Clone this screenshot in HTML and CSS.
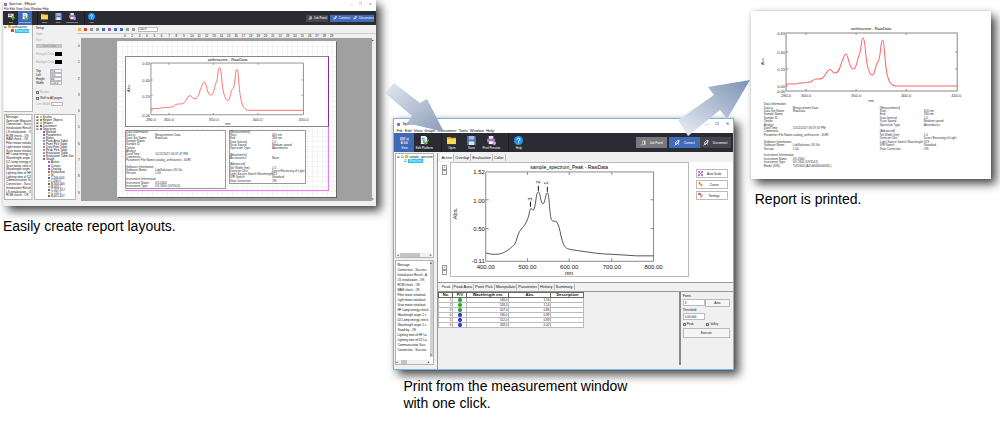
FILE: index.html
```html
<!DOCTYPE html>
<html lang="en">
<head>
    <meta charset="UTF-8">
    <meta name="viewport" content="width=device-width, initial-scale=1.0">
    <title>Report printing</title>
    <link rel="stylesheet" href="styles.css">
</head>
<body>
    <!-- Shared icons and the anthracene curve -->
    <svg class="defs" aria-hidden="true">
        <symbol id="i-view" viewBox="0 0 10 10"><path fill="#b9a6d8" d="M0 1h6v4H0zM4 6h5v3H4z"/><path fill="#8fb0dc" d="M1 2h4v2H1zM7 2h3v3H7z"/><path fill="#d5def0" d="M1 6h2v3H1z"/></symbol>
        <symbol id="i-new" viewBox="0 0 10 10"><path fill="#e9e6ef" d="M0 1h8v5H0z"/><path fill="#9061a8" d="M1 2h4v2H1z"/><path fill="#5bb043" d="M6 4h2v2h2v2H8v2H6V8H4V6h2z"/></symbol>
        <symbol id="i-edit" viewBox="0 0 10 10"><path fill="#f4f6f8" d="M1 0h5l2 2v7H1z"/><path fill="#4d86c8" d="M2 2h3v1H2zM2 4h4v1H2z"/><path fill="#5db336" d="M4 5l2 2 3-3 1 1-4 5-3-3z"/></symbol>
        <symbol id="i-folder" viewBox="0 0 10 10"><path fill="#d9a520" d="M0 1h4l1 1h5v7H0z"/><path fill="#f9d65c" d="M0 3h10v6H0z"/></symbol>
        <symbol id="i-disk" viewBox="0 0 10 10"><path fill="#4d70b4" d="M0 0h9l1 1v9H0z"/><path fill="#a9bddd" d="M2 0h6v4H2z"/><path fill="#dfe6f2" d="M2 6h6v4H2z"/></symbol>
        <symbol id="i-print" viewBox="0 0 10 10"><path fill="#e8e2ef" d="M2 0h5v4H2z"/><path fill="#9b72b4" d="M0 3h9v4H0z"/><path fill="#fff" d="M2 6h5v3H2z"/><circle cx="8" cy="8" r="2" fill="#c9a5dc"/></symbol>
        <symbol id="i-help" viewBox="0 0 10 10"><circle cx="5" cy="5" r="5" fill="#2196f3"/><path fill="none" stroke="#fff" d="M3.500 4q0-1.600 1.500-1.600T6.500 4Q6.500 5 5 5.500V6.500M5 7.300v1"/></symbol>
        <symbol id="i-panel" viewBox="0 0 10 10"><path fill="#e8e8e8" d="M4 1h5v7H4z"/><path fill="#222" d="M5 2h1v5H5z"/><path fill="#aaa" d="M1 7h6v2H1z"/></symbol>
        <symbol id="i-plug" viewBox="0 0 10 10"><path fill="none" stroke="currentColor" stroke-width="1.500" d="M1 9l2-2M3 4l3-3h2v2L5 7H3zM7 3l2-2M5 5l3 2"/></symbol>
        <symbol id="i-scale" viewBox="0 0 10 10"><path fill="none" stroke="#9b59c6" stroke-width="1.500" d="M1 1l8 8M9 1L1 9M1 4V1h3M6 1h3v3M9 6v3H6M4 9H1V6"/></symbol>
        <symbol id="i-cursor" viewBox="0 0 10 10"><path fill="#e0413a" d="M1 0l5 2-3 3z"/><path fill="#f2b632" d="M5 4h4v4H5z"/><path stroke="#a33" d="M3 3l4 5"/></symbol>
        <symbol id="i-settings" viewBox="0 0 10 10"><path fill="#9b6cc0" d="M0 0h6v4H0z"/><path fill="#f2b632" d="M4 4h4v5H4z"/><path fill="#d55" d="M7 3h2v3H7z"/></symbol>
        <symbol id="anthracene" viewBox="0 0 171 58" overflow="visible">
            <path class="frame" d="M0 0H171V58H0zM20 58v-2M70 58v-2M120 58v-2M20 0v2M70 0v2M120 0v2M0 19h2M0 36h2M0 53h2M171 19h-2M171 36h-2"/>
            <path class="curve-red" d="M0 51H9C12 50 15 50 22 49.500C26 49 27 46 30 46C34 45.500 36 47 39 42C41 39 42 36.500 44 36.500C46 36.500 46 40 49 40C54 40 54 31 57 26C58 23 59 21 60 21C62 21 63 36 67 36C71 36 71 25 73.500 21C75 18 75 5 77 5C79 5 79 20 81 31C82.500 38 84 42 86 42C89 42 89 33 91 30C95 28 94 7 96.500 7C98.500 7 98 27 101 41C103 50 105 52.500 110 53H171"/>
        </symbol>
    </svg>

    <main class="flow">
        <figure class="step">
            <div class="window editor">
                <header class="titlebar">
                    <span class="app-icon"></span><span>Spectrum - RReport</span>
                    <span class="win-buttons"><i>–</i><i>❐</i><i>✕</i></span>
                </header>
                <nav class="menu"><span>File</span><span>Edit</span><span>View</span><span>Data</span><span>Window</span><span>Help</span></nav>
                <div class="toolbar">
                    <button class="tool"><svg><use href="#i-new"/></svg>New</button>
                    <button class="tool active"><svg><use href="#i-edit"/></svg>Edit Platform</button>
                    <button class="tool gap-left"><svg><use href="#i-folder"/></svg>Open</button>
                    <button class="tool"><svg><use href="#i-disk"/></svg>Save</button>
                    <button class="tool"><svg><use href="#i-print"/></svg>Print Preview</button>
                    <button class="tool gap-left"><svg><use href="#i-help"/></svg>Help</button>
                    <div class="status-buttons">
                        <button class="dark"><svg><use href="#i-panel"/></svg>Job Panel</button>
                        <button class="blue"><svg><use href="#i-plug"/></svg>Connect</button>
                        <button class="blue joined"><svg><use href="#i-plug"/></svg>Disconnect</button>
                    </div>
                </div>
                <div class="editor-body">
                    <aside class="column">
                        <div class="pane tree"><p>⊟ <b class="y"></b>anthracene</p><p class="child"><b class="r"></b><mark>RawData</mark></p></div>
                        <ul class="pane messages">
                            <li>Message</li><li>Spectrum Measurem</li><li>Connection - Succes</li><li>Initialization Result - O</li><li>LS initialization - OK</li><li>ROM check - OK</li><li>RAM check - OK</li><li>Filter motor initializat</li><li>Light motor initializat</li><li>Scan motor initializat</li><li>HF Lamp energy che</li><li>Wavelength origin 1</li><li>D2 Lamp energy che</li><li>Scan motor slew ch</li><li>Wavelength origin -</li><li>Lighting time of HF</li><li>Lighting time of D2</li><li>Communication Su</li><li>Connection - Succes</li><li>Initialization Result -</li><li>LS initialization - OK</li><li>ROM check - OK</li>
                        </ul>
                    </aside>
                    <aside class="column">
                        <form class="properties">
                            <p>Setup</p>
                            <p class="dim">Style</p>
                            <p class="dim">Font</p>
                            <button type="button">Text Color</button>
                            <p class="dim swatch">Foregrd Color<b></b></p>
                            <p class="dim swatch">Backgrd Color<b></b></p>
                            <div class="sizes">
                                <label>Top<input value="9.0"></label>
                                <label>Left<input value="9.0"></label>
                                <label>Height<input value="68"></label>
                                <label>Width<input value="170.0"></label>
                            </div>
                            <label class="dim"><input type="checkbox" disabled>Border</label>
                            <label><input type="checkbox">Shift to All pages</label>
                            <label class="dim">Line Width <input class="spin" value="1"></label>
                        </form>
                        <ul class="pane items">
                            <li>⊞ <b class="y"></b>Scales</li><li>⊞ <b class="g"></b>Report Objects</li><li>⊞ <b class="y"></b>Shapes</li><li>⊞ <b class="u"></b>Document</li><li>⊟ <b class="v"></b>Spectrum</li>
                            <li class="l2"><b class="v"></b>Method</li><li class="l2"><b class="v"></b>Parameters</li><li class="l2"><b class="c"></b>Notes</li><li class="l2"><b></b>Peak Area Table</li><li class="l2"><b></b>Point Pick Table</li><li class="l2"><b></b>Data Print Table</li><li class="l2"><b></b>Peak Pick Table</li><li class="l2"><b></b>Evaluation Table</li><li class="l2"><b></b>Evaluation Table Det</li><li class="l2"><b class="v"></b>Graph</li>
                            <li class="l3"><b class="v"></b>Active</li><li class="l3"><b class="v"></b>Curves</li><li class="l3"><b class="v"></b>Overlay</li><li class="l3"><b class="v"></b>Evaluation</li><li class="l3"><b class="y"></b>Id</li><li class="l3"><b class="u"></b>1,200.000</li><li class="l3"><b class="y"></b>1,200.1</li><li class="l3"><b class="u"></b>B,300.000</li><li class="l3"><b class="y"></b>B,400.1</li><li class="l3"><b class="u"></b>C,317.317</li><li class="l3"><b class="y"></b>C,211.1</li><li class="l3"><b class="u"></b>B,401.417</li>
                        </ul>
                    </aside>
                    <section class="designer">
                        <div class="mini-tools">
                            <b class="y"></b><b class="r"></b><b></b><b></b><b class="u"></b><b class="v"></b><b class="u"></b><b class="u"></b><b></b><b></b>
                            <select aria-label="Zoom"><option>100%</option></select>
                        </div>
                        <div class="ruler">
                            <span>0</span><span>2</span><span>3</span><span>4</span><span>5</span><span>6</span><span>7</span><span>8</span><span>9</span><span>10</span><span>11</span><span>12</span><span>13</span><span>14</span><span>15</span><span>16</span><span>17</span><span>18</span><span>19</span><span>20</span><span>21</span><span>22</span><span>23</span><span>24</span><span>25</span><span>26</span><span>27</span><span>28</span><span>29</span>
                        </div>
                        <div class="workspace">
                            <div class="side-ruler"><i>0</i><i>1</i><i>2</i><i>3</i><i>4</i><i>5</i><i>6</i><i>7</i><i>8</i><i>9</i></div>
                            <div class="canvas">
                                <article class="sheet">
                                    <svg class="selected-plot" viewBox="0 0 203 69">
                                        <use href="#anthracene" x="25" y="6" width="153" height="52"/>
                                        <g class="small-text">
                                            <text x="102" y="4" class="mid dark-text">anthracene - RawData</text>
                                            <g class="end"><text x="24" y="8">0.63</text><text x="24" y="25">0.40</text><text x="24" y="41">0.20</text><text x="24" y="60">-0.06</text></g>
                                            <g class="mid"><text x="25" y="64">280.0</text><text x="43" y="64">300.0</text><text x="88" y="64">350.0</text><text x="132" y="64">400.0</text><text x="178" y="64">450.0</text><text x="102" y="68">nm</text></g>
                                            <text transform="translate(4 35) rotate(-90)">Abs.</text>
                                        </g>
                                    </svg>
                                    <div class="sheet-text">
                                        <dl class="facts boxed left">
                                            <div><dt>Data Information</dt></div>
                                            <div><dt>Data is</dt><dd>Measurement Data</dd></div>
                                            <div><dt>Data Set Name</dt><dd>RawData</dd></div>
                                            <div><dt>Sample Name</dt></div>
                                            <div><dt>Sample ID</dt></div>
                                            <div><dt>Option</dt></div>
                                            <div><dt>Analyst</dt></div>
                                            <div><dt>Date/Time</dt><dd>10/12/2017 06:37:47 PM</dd></div>
                                            <div><dt>Comments</dt></div>
                                            <div><dt>Parameter File Name</dt><dd>catalog_anthracene . 4URI</dd></div>
                                            <div></div>
                                            <div><dt>Software Information</dt></div>
                                            <div><dt>Software Name</dt><dd>LabSolutions UV-Vis</dd></div>
                                            <div><dt>Version</dt><dd>1.00</dd></div>
                                            <div></div>
                                            <div><dt>Instrument Information</dt></div>
                                            <div><dt>Instrument Name</dt><dd>UV-2600</dd></div>
                                            <div><dt>Instrument Type</dt><dd>UV-2600 (UV1501)</dd></div>
                                        </dl>
                                        <dl class="facts boxed right">
                                            <div><dt>[Measurement]</dt></div>
                                            <div><dt>Start</dt><dd>450 nm</dd></div>
                                            <div><dt>End</dt><dd>280 nm</dd></div>
                                            <div><dt>Data Interval</dt><dd>1.0</dd></div>
                                            <div><dt>Scan Speed</dt><dd>Medium speed</dd></div>
                                            <div><dt>Spectrum Type</dt><dd>Absorbance</dd></div>
                                            <div></div>
                                            <div><dt>[Attachment]</dt></div>
                                            <div><dt>Accessories</dt><dd>None</dd></div>
                                            <div></div>
                                            <div><dt>[Advanced]</dt></div>
                                            <div><dt>Slit Width (nm)</dt><dd>1.0</dd></div>
                                            <div><dt>Detector Unit</dt><dd>Direct Receiving of Light</dd></div>
                                            <div><dt>Light Source Switch Wavelength</dt><dd>323</dd></div>
                                            <div><dt>S/R Switch</dt><dd>Standard</dd></div>
                                            <div><dt>Stair Correction</dt><dd>ON</dd></div>
                                        </dl>
                                    </div>
                                </article>
                            </div>
                            <div class="scroll"><i>▴</i><i>▾</i></div>
                        </div>
                    </section>
                </div>
            </div>
            <figcaption>Easily create report layouts.</figcaption>
        </figure>

        <figure class="step middle">
            <svg class="arrow arrow-in" viewBox="0 0 60 50" aria-hidden="true">
                <linearGradient id="fade-in" x1="0" y1="0" x2="1" y2="1"><stop offset="0" stop-color="#e3e8f0"/><stop offset="1" stop-color="#8b9cb8"/></linearGradient>
                <path fill="url(#fade-in)" d="M9 1L35 21 42 17 59 50 22 41 27 34 0 11z"/>
            </svg>
            <svg class="arrow arrow-out" viewBox="0 0 73 57" aria-hidden="true">
                <linearGradient id="fade-out" x1="0" y1="1" x2="1" y2="0"><stop offset="0" stop-color="#eceff5"/><stop offset="1" stop-color="#7c92b4"/></linearGradient>
                <path fill="url(#fade-out)" d="M0 40L36 15 30 7 72 0 49 39 42 30 10 56z"/>
            </svg>
            <div class="window measure">
                <header class="titlebar">
                    <span class="app-icon"></span><span>Spectrum</span>
                    <span class="win-buttons"><i>–</i><i>❐</i><i>✕</i></span>
                </header>
                <nav class="menu"><span>File</span><span>Edit</span><span>View</span><span>Graph</span><span>Instrument</span><span>Tools</span><span>Window</span><span>Help</span></nav>
                <div class="toolbar">
                    <button class="tool active"><svg><use href="#i-view"/></svg>View</button>
                    <button class="tool"><svg><use href="#i-edit"/></svg>Edit Platform</button>
                    <button class="tool gap-left"><svg><use href="#i-folder"/></svg>Open</button>
                    <button class="tool"><svg><use href="#i-disk"/></svg>Save</button>
                    <button class="tool"><svg><use href="#i-print"/></svg>Print Preview</button>
                    <button class="tool gap-left"><svg><use href="#i-help"/></svg>Help</button>
                    <div class="status-buttons">
                        <button class="grey"><svg><use href="#i-panel"/></svg>Job Panel</button>
                        <button class="blue"><svg><use href="#i-plug"/></svg>Connect</button>
                        <button class="dark joined"><svg><use href="#i-plug"/></svg>Disconnect</button>
                    </div>
                </div>
                <div class="measure-body">
                    <aside class="column">
                        <div class="pane tree">
                            <p>⊟ ☑ <b class="y"></b>sample_spectrum</p><p class="child">☑ <mark>RawData</mark></p>
                            <div class="hscroll"><span>◂</span><i></i><span>▸</span></div>
                        </div>
                        <div class="pane log">
                            <ul>
                                <li class="head">Message</li><li>Connection - Success</li><li>Initialization Result - A</li><li>LS initialization - OK</li><li>ROM check - OK</li><li>RAM check - OK</li><li>Filter motor initializati</li><li>Light motor initializati</li><li>Scan motor initializati</li><li>HF Lamp energy check</li><li>Wavelength origin 1 s</li><li>D2 Lamp energy check</li><li>Wavelength origin 2 s</li><li>Stand by - OK</li><li>Lighting time of HF La</li><li>Lighting time of D2 La</li><li>Communication Succ</li><li>Connection - Success</li>
                            </ul>
                            <div class="log-scroll"><span>▴</span><span>▾</span></div>
                            <div class="hscroll"><span>◂</span><i></i><span>▸</span></div>
                        </div>
                    </aside>
                    <section class="results">
                        <div class="tabs"><button class="on">Active</button><button>Overlap</button><button>Evaluation</button><button>Color</button></div>
                        <div class="graph-row">
                            <div class="steppers"><span><i>+</i><i>-</i></span><span><i>+</i><i>-</i></span></div>
                            <svg class="spectrum" viewBox="0 0 238 114">
                                <path class="frame" d="M35 9H204V99H35zM77 99v-3M119 99v-3M162 99v-3M77 9v3M119 9v3M162 9v3M35 37h3M35 66h3M204 37h-3M204 66h-3"/>
                                <path class="curve-dark" d="M35 90.500C38 91.500 41 92 45 92C52 92 58 88 64 82C66 79 67 72 69 69L72 65C75 62 77 58 78.500 52C80 43 81 46 82.500 47.500C86 46 85 29 88 29C90 29 90 41 92.500 41C95 41 95 30 97 30C99 30 99 50 101 57C103 60 104 57 107 60C110 66 110 72 112 78C114 85 116 86 120 87L126 88C140 90 152 92 163 92L187 93.500H204"/>
                                <path class="peaks" d="M80 39v5M88 23v5M97 24v5"/>
                                <text x="119" y="6" class="plot-title mid">sample_spectrum_Peak - RawData</text>
                                <g class="ticks end"><text x="34" y="11">1.52</text><text x="34" y="40">1.00</text><text x="34" y="68">0.50</text><text x="34" y="101">-0.11</text></g>
                                <g class="ticks mid"><text x="35" y="107">400.00</text><text x="77" y="107">500.00</text><text x="119" y="107">600.00</text><text x="162" y="107">700.00</text><text x="204" y="107">800.00</text><text x="119" y="113">nm</text></g>
                                <g class="ticks"><text transform="translate(6 57) rotate(-90)">Abs.</text><text transform="translate(82 38) rotate(-90)">3</text><text transform="translate(90 21) rotate(-90)">2</text><text transform="translate(98 22) rotate(-90)">1</text></g>
                            </svg>
                            <div class="graph-tools">
                                <button><svg><use href="#i-scale"/></svg>Auto Scale</button>
                                <button><svg><use href="#i-cursor"/></svg>Cursor</button>
                                <button><svg><use href="#i-settings"/></svg>Settings</button>
                            </div>
                        </div>
                        <div class="tabs lower"><button class="on">Peak</button><button>Peak Area</button><button>Point Pick</button><button>Manipulate</button><button>Parameter</button><button>History</button><button>Summary</button></div>
                        <div class="peak-row">
                            <table>
                                <thead><tr><th class="no">No.</th><th class="pv">P/V</th><th class="wide">Wavelength nm.</th><th class="wide">Abs.</th><th>Description</th></tr></thead>
                                <tbody>
                                    <tr><td>1</td><td><b class="peak">↑</b></td><td>546.0</td><td>1.16</td><td></td></tr>
                                    <tr><td>2</td><td><b class="peak">↑</b></td><td>526.0</td><td>1.14</td><td></td></tr>
                                    <tr><td>3</td><td><b class="peak">↑</b></td><td>507.0</td><td>0.86</td><td></td></tr>
                                    <tr><td>4</td><td><b class="valley">↓</b></td><td>536.0</td><td>0.98</td><td></td></tr>
                                    <tr><td>5</td><td><b class="valley">↓</b></td><td>512.0</td><td>0.83</td><td></td></tr>
                                    <tr><td>6</td><td><b class="valley">↓</b></td><td>418.0</td><td>0.02</td><td></td></tr>
                                </tbody>
                            </table>
                            <form class="peak-form">
                                <label for="points">Points</label>
                                <div class="pair"><input id="points" value="3"><button type="button">Auto</button></div>
                                <label for="threshold">Threshold</label>
                                <input id="threshold" value="0.00.000">
                                <div class="pair"><label><input type="checkbox" checked>Peak</label><label><input type="checkbox" checked>Valley</label></div>
                                <button type="button">Execute</button>
                            </form>
                        </div>
                    </section>
                </div>
            </div>
            <figcaption>Print from the measurement window<br>with one click.</figcaption>
        </figure>

        <figure class="step last">
            <article class="window printout">
                <svg viewBox="0 0 240 92">
                    <use href="#anthracene" x="35" y="22" width="171" height="58"/>
                    <g class="small-text">
                        <text x="120" y="19" class="mid dark-text">anthracene - RawData</text>
                        <g class="end"><text x="34" y="24">0.63</text><text x="34" y="43">0.40</text><text x="34" y="60">0.20</text><text x="34" y="77">0.00</text><text x="34" y="82">-0.06</text></g>
                        <g class="mid"><text x="35" y="86">280.0</text><text x="55" y="86">300.0</text><text x="105" y="86">350.0</text><text x="155" y="86">400.0</text><text x="205" y="86">450.0</text><text x="120" y="91">nm</text></g>
                        <text transform="translate(13 54) rotate(-90)">Abs.</text>
                    </g>
                </svg>
                <div class="print-text">
                    <dl class="facts left">
                        <div><dt>Data Information</dt></div>
                        <div><dt>Data is</dt><dd>Measurement Data</dd></div>
                        <div><dt>Data Set Name</dt><dd>RawData</dd></div>
                        <div><dt>Sample Name</dt></div>
                        <div><dt>Sample ID</dt></div>
                        <div><dt>Option</dt></div>
                        <div><dt>Analyst</dt></div>
                        <div><dt>Date/Time</dt><dd>10/12/2017 06:37:47 PM</dd></div>
                        <div><dt>Comments</dt></div>
                        <div><dt>Parameter File Name</dt><dd>catalog_anthracene . 4URI</dd></div>
                        <div></div>
                        <div><dt>Software Information</dt></div>
                        <div><dt>Software Name</dt><dd>LabSolutions UV-Vis</dd></div>
                        <div><dt>Version</dt><dd>1.00</dd></div>
                        <div></div>
                        <div><dt>Instrument Information</dt></div>
                        <div><dt>Instrument Name</dt><dd>UV-2600</dd></div>
                        <div><dt>Instrument Type</dt><dd>UV-2600 (UV1501)</dd></div>
                        <div><dt>Model (S/N)</dt><dd>*UV2600 (A11664000006SL)</dd></div>
                    </dl>
                    <dl class="facts right">
                        <div></div>
                        <div><dt>[Measurement]</dt></div>
                        <div><dt>Start</dt><dd>450 nm</dd></div>
                        <div><dt>End</dt><dd>280 nm</dd></div>
                        <div><dt>Data Interval</dt><dd>1.0</dd></div>
                        <div><dt>Scan Speed</dt><dd>Medium speed</dd></div>
                        <div><dt>Spectrum Type</dt><dd>Absorbance</dd></div>
                        <div></div>
                        <div><dt>[Advanced]</dt></div>
                        <div><dt>Slit Width (nm)</dt><dd>1.0</dd></div>
                        <div><dt>Detector Unit</dt><dd>Direct Receiving of Light</dd></div>
                        <div><dt>Light Source Switch Wavelength</dt><dd>323</dd></div>
                        <div><dt>S/R Switch</dt><dd>Standard</dd></div>
                        <div><dt>Stair Correction</dt><dd>ON</dd></div>
                        <div></div><div></div><div></div><div></div><div></div>
                    </dl>
                </div>
            </article>
            <figcaption>Report is printed.</figcaption>
        </figure>
    </main>
</body>
</html>
```

FILE: styles.css
```css
* {
    box-sizing: border-box;
}
body {
    margin: 0;
    background: white;
    color: #111;
    font-family: "Liberation Sans", Arial, sans-serif;
}
p, ul, dl, dd, figure {
    margin: 0;
    padding: 0;
}
ul {
    list-style: none;
}
i {
    font-style: normal;
}
button, input, select {
    font: inherit;
    color: inherit;
    margin: 0;
    padding: 0;
    border: 1px solid #bbb;
    border-radius: 0;
    background: #f4f4f4;
    appearance: none;
    min-width: 0;
}
.defs {
    position: absolute;
    width: 0;
    height: 0;
}

/* Three steps side by side */
.flow {
    display: grid;
    grid-template-columns: 373fr 340fr 240fr;
    gap: 17px;
    padding: 0 9px 0 3px;
    align-items: start;
}
.step {
    min-width: 0;
}
.middle {
    position: relative;
    padding-top: 118px;
}
.last {
    padding-top: 11px;
}
figcaption {
    font-size: 14px;
    line-height: 17px;
    padding-top: 12px;
    color: #000;
}
.middle figcaption {
    padding: 8px 0 0 10px;
}
.last figcaption {
    padding: 12px 0 0 4px;
}
.arrow {
    position: absolute;
    z-index: 2;
}
.arrow-in {
    width: 60px;
    left: -8px;
    top: 82px;
}
.arrow-out {
    width: 73px;
    right: -17px;
    top: 80px;
}

/* Window frame */
.window {
    background: white;
    box-shadow: 5px 5px 9px rgba(0, 0, 0, 0.7), 0 0 3px rgba(0, 0, 0, 0.15);
    font-size: 3px;
    line-height: 4px;
    white-space: nowrap;
}
.measure {
    border: 1px solid #73b6e6;
}
.titlebar, .menu, .toolbar, .win-buttons, .status-buttons {
    display: flex;
    align-items: center;
}
.titlebar {
    height: 7px;
    padding: 1px 4px 0 1px;
    gap: 2px;
}
.measure .titlebar {
    height: 9px;
    padding-left: 3px;
    font-size: 4px;
}
.app-icon {
    width: 3px;
    height: 3px;
    background: #9b6cc0;
}
.win-buttons {
    margin-left: auto;
    gap: 7px;
}
.menu {
    height: 4px;
    gap: 1px;
    padding-left: 1px;
}
.measure .menu {
    height: 5px;
    font-size: 4px;
    gap: 2px;
    padding-left: 2px;
}
.toolbar {
    background: #2b2c33;
    color: white;
    height: 14px;
    padding-left: 1px;
}
.measure .toolbar {
    height: 19px;
    padding-left: 0;
}
.tool {
    display: flex;
    flex-direction: column;
    align-items: center;
    justify-content: center;
    gap: 1px;
    width: 14px;
    height: 100%;
    border: 0;
    background: none;
    font-size: 2px;
    line-height: 3px;
}
.tool svg {
    width: 7px;
    height: 7px;
}
.measure .tool {
    width: 20px;
    gap: 2px;
    font-size: 3px;
}
.measure .tool svg {
    width: 9px;
    height: 9px;
}
.tool.active {
    background: #3e6ab5;
}
.tool.gap-left {
    margin-left: 5px;
    border-left: 1px solid #1c1c20;
}
.measure .tool.gap-left {
    margin-left: 7px;
}
.status-buttons {
    margin-left: auto;
    padding-right: 2px;
}
.status-buttons button {
    display: flex;
    align-items: center;
    justify-content: center;
    gap: 2px;
    width: 22px;
    height: 7px;
    margin-left: 2px;
    border: 0;
}
.measure .status-buttons button {
    width: 31px;
    height: 11px;
    gap: 4px;
}
.status-buttons svg {
    width: 4px;
    height: 4px;
}
.measure .status-buttons svg {
    width: 6px;
    height: 6px;
}
.status-buttons .grey {
    background: #77787c;
}
.status-buttons .dark {
    background: #45464c;
}
.status-buttons .blue {
    background: #3f6bb7;
}
.status-buttons button.joined {
    margin-left: 0;
}

/* Small coloured markers used in trees and tool rows */
p b, li b, .mini-tools b {
    display: inline-block;
    width: 3px;
    height: 3px;
    margin-right: 1px;
    background: #999;
}
b.y { background: #f2b632; }
b.r { background: #e0413a; }
b.g { background: #59a845; }
b.u { background: #3b6fc4; }
b.v { background: #9b59c6; }
b.c { background: #35c4d8; }
mark {
    background: #1fc0f5;
    color: #e8faff;
    padding: 0 1px;
}
.column {
    display: flex;
    flex-direction: column;
    gap: 2px;
    min-width: 0;
}
.pane {
    background: white;
    border: 1px solid #b4b4b4;
    overflow: hidden;
}
.tree .child {
    padding-left: 7px;
}

/* Report editor */
.editor-body {
    display: grid;
    grid-template-columns: 29px 42px 1fr;
    gap: 1px;
    padding: 0 0 5px 1px;
    background: #f0f0f0;
}
.editor .tree, .properties {
    height: 87px;
}
.editor .tree {
    border-width: 0 1px 1px 0;
}
.messages, .items {
    display: flex;
    flex-direction: column;
    height: 86px;
    padding: 1px;
}
.messages li, .items li {
    flex: 1;
    min-height: 0;
    line-height: 3px;
}
.messages {
    border-right: 2px solid #d0d0d0;
    padding-right: 0;
}
.items .l2 { padding-left: 7px; }
.items .l3 { padding-left: 12px; }
.items li b {
    width: 2px;
    height: 2px;
}
.properties {
    display: flex;
    flex-direction: column;
    gap: 2px;
    padding: 1px 2px;
}
.properties button {
    width: 26px;
    height: 4px;
    line-height: 3px;
    border: 0;
    background: #c5c5c5;
    color: #888;
}
.dim {
    color: #aaa;
}
.swatch {
    display: flex;
    justify-content: space-between;
    align-items: center;
    width: 26px;
    margin-top: 2px;
}
.swatch b {
    flex: none;
    width: 7px;
    height: 4px;
    margin: 0;
    background: black;
}
.sizes {
    margin: 3px 0;
}
.sizes label {
    display: flex;
    justify-content: space-between;
    width: 26px;
}
.sizes input, .spin {
    width: 12px;
    height: 4px;
    line-height: 3px;
    background: white;
}
input[type="checkbox"] {
    width: 3px;
    height: 3px;
    margin-right: 1px;
    border-color: #777;
    background: white;
    vertical-align: middle;
}
.mini-tools {
    display: flex;
    align-items: center;
    gap: 2px;
    height: 8px;
    padding-left: 1px;
}
.mini-tools select {
    width: 20px;
    height: 5px;
    line-height: 3px;
    background: white;
}
.ruler {
    display: flex;
    justify-content: space-between;
    height: 5px;
    padding: 0 44px 0 47px;
    border-top: 1px solid #ccc;
}
.ruler span {
    width: 2px;
}
.workspace {
    display: grid;
    grid-template-columns: 4px 1fr 4px;
}
.side-ruler {
    display: flex;
    flex-direction: column;
    justify-content: space-around;
    padding-left: 1px;
}
.canvas {
    background: #a0a0a0;
    padding: 3px 36px 4px 36px;
}
.scroll {
    display: flex;
    flex-direction: column;
    justify-content: space-between;
    background: #eee;
}
.sheet {
    padding: 15px 7px 6px 8px;
    background: repeating-linear-gradient(90deg, #f3f3f3 0 1px, transparent 1px 5px), repeating-linear-gradient(#f3f3f3 0 1px, transparent 1px 5px), white;
    box-shadow: 1px 1px 0 #666;
}
.selected-plot {
    display: block;
    width: 100%;
    background: white;
    border: 1px solid #888;
    border-right-color: #8a2f9b;
}
.sheet-text {
    display: flex;
    align-items: flex-start;
    gap: 3px;
    padding: 3px 22px 1px 0;
    border: 1px solid #f07af0;
    border-top: 0;
    border-left: 0;
}

/* Name and value lists of the report */
.facts {
    display: flex;
    flex-direction: column;
    color: #333;
}
.facts div {
    display: flex;
    flex: 1;
    min-height: 0;
    line-height: 3px;
}
.boxed {
    border: 1px solid #999;
    background: white;
}
.boxed.left {
    flex: 101;
    height: 59px;
}
.boxed.right {
    flex: 77;
    height: 54px;
}
.facts dt {
    width: 29px;
}
.facts.right dt {
    width: 44px;
}
.facts.boxed dt {
    flex: none;
}
.facts.boxed.right dt {
    width: 42px;
}

/* Plots */
svg text {
    font-size: 4px;
    fill: #333;
}
.mid text, text.mid {
    text-anchor: middle;
}
.end text {
    text-anchor: end;
}
.ticks text {
    font-size: 6px;
    fill: #111;
}
text.plot-title {
    font-size: 5px;
    fill: #000;
}
text.dark-text {
    fill: #000;
}
.frame {
    fill: none;
    stroke: #888;
    stroke-width: 1;
}
.curve-red {
    fill: none;
    stroke: #ff6464;
    stroke-width: 1;
}
.selected-plot .frame {
    stroke: #777;
}
.curve-dark, .peaks {
    fill: none;
    stroke: #555;
    stroke-width: 1;
}
.peaks {
    stroke: #111;
}

/* Measurement window */
.measure-body {
    display: grid;
    grid-template-columns: 41px 1fr;
    gap: 2px;
    padding-top: 1px;
    background: #f0f0f0;
}
.measure .column {
    padding: 0 1px 4px 1px;
}
.measure .tree {
    display: flex;
    flex-direction: column;
    height: 105px;
    padding: 1px 1px 0;
}
.hscroll {
    display: flex;
    justify-content: space-between;
    margin-top: auto;
    background: #f0f0f0;
}
.hscroll i {
    width: 20px;
    margin-right: 9px;
    background: #c4c4c4;
}
.log {
    display: grid;
    grid-template-columns: 1fr 3px;
    flex: 1;
}
.log ul {
    padding: 1px;
    min-width: 0;
}
.log li {
    line-height: 5px;
}
.log .head {
    line-height: 6px;
}
.log-scroll {
    display: flex;
    flex-direction: column;
    justify-content: space-between;
    background: #d0d0d0;
}
.log .hscroll i {
    width: 6px;
    margin-right: 18px;
}
.results {
    border-left: 1px solid #999;
    min-width: 0;
    display: flex;
    flex-direction: column;
}
.tabs {
    display: flex;
    height: 9px;
    padding: 1px 0 1px 2px;
    font-size: 4px;
    background: #f0f0f0;
}
.tabs button {
    border-width: 0 1px 0 0;
    background: none;
    padding: 0 1px;
}
.tabs .on {
    background: white;
}
.graph-row {
    display: grid;
    grid-template-columns: 12px 1fr 44px;
    padding-bottom: 5px;
    background: white;
    border-bottom: 1px solid #999;
}
.spectrum {
    display: block;
    width: 100%;
    border: 1px solid #bbb;
}
.steppers {
    display: flex;
    flex-direction: column;
    align-items: center;
    justify-content: space-between;
    padding: 3px 0 2px;
}
.steppers i {
    display: block;
    width: 5px;
    height: 5px;
    border: 1px solid #999;
    line-height: 3px;
    text-align: center;
}
.graph-tools {
    display: flex;
    flex-direction: column;
    gap: 2px;
    padding: 7px 5px 0 7px;
}
.graph-tools button {
    display: grid;
    grid-template-columns: 5px 1fr;
    align-items: center;
    height: 9px;
    padding: 0 1px;
    background: white;
}
.graph-tools svg {
    width: 5px;
    height: 5px;
}
.tabs.lower {
    height: 8px;
}
.peak-row {
    display: flex;
    justify-content: space-between;
    align-items: flex-start;
    flex: 1;
    padding-bottom: 4px;
    border-top: 1px solid #999;
}
table {
    border-collapse: collapse;
    table-layout: fixed;
    width: 146px;
    font-size: 3px;
    background: white;
}
th, td {
    height: 5px;
    padding: 0 1px;
    border: 1px solid #bbb;
    line-height: 4px;
    text-align: right;
}
th {
    border-color: #666;
    font-size: 4px;
    text-align: center;
}
th.no { width: 14px; }
th.pv { width: 14px; }
th.wide { width: 42px; }
td b {
    display: block;
    width: 4px;
    height: 4px;
    margin: auto;
    border-radius: 2px;
    color: white;
    text-align: center;
}
.peak { background: #0fa51c; }
.valley { background: #1522c8; }
.peak-form {
    display: flex;
    flex-direction: column;
    gap: 1px;
    width: 54px;
    min-height: 73px;
    padding: 2px 3px 0 2px;
    border-left: 2px solid #888;
}
.peak-form input:not([type]) {
    width: 22px;
    height: 7px;
    padding-left: 1px;
    background: white;
}
.pair {
    display: flex;
    justify-content: space-between;
}
.pair button {
    width: 25px;
    height: 8px;
}
.pair label {
    width: 25px;
    line-height: 6px;
}
.peak-form > button {
    height: 10px;
}

/* Printed sheet */
.printout {
    padding-bottom: 11px;
}
.printout svg {
    display: block;
    width: 100%;
}
.print-text {
    display: flex;
    gap: 16px;
    padding-left: 13px;
}
.print-text .facts {
    height: 65px;
    flex: 100;
}
.print-text .right {
    flex: 111;
}
```
